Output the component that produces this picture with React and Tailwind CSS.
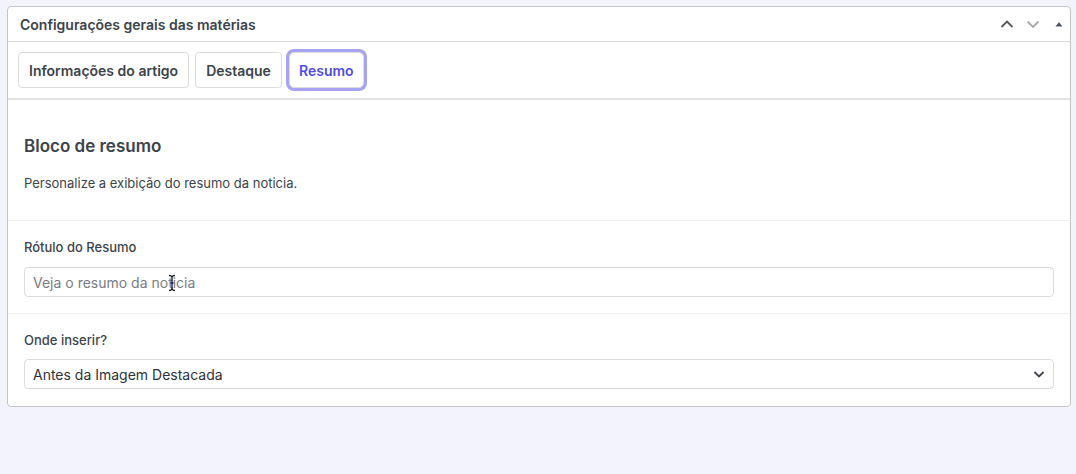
import React from "react";

const font = { fontFamily: "Inter, 'Noto Sans', 'Liberation Sans', sans-serif" };

function Chevron({ dir = "up", color = "#50575e" }) {
  return (
    <svg width="16" height="16" viewBox="0 0 16 16" fill="none">
      {dir === "up" ? (
        <path d="M2.5 11 L8 5.5 L13.5 11" stroke={color} strokeWidth="1.8" />
      ) : (
        <path d="M2.5 5.5 L8 11 L13.5 5.5" stroke={color} strokeWidth="1.8" />
      )}
    </svg>
  );
}

export default function App() {
  return (
    <div className="w-[1076px] h-[474px] bg-[#f3f3fc] pt-[6px] pl-[7px] pr-[5px]" style={font}>
      <div className="bg-white border border-[#c3c4c7] rounded-[4px] w-[1064px]">
        <div className="h-[35px] flex items-center justify-between pl-[12px] pr-[3px] border-b border-[#dcdcde]">
          <span className="text-[14px] font-semibold text-[#3c434a]">Configurações gerais das matérias</span>
          <div className="flex items-center gap-[10px]">
            <Chevron dir="up" color="#50575e" />
            <Chevron dir="down" color="#a7aaad" />
            <svg width="16" height="16" viewBox="0 0 16 16">
              <path d="M4.5 10.5 L8 6 L11.5 10.5 Z" fill="#50575e" />
            </svg>
          </div>
        </div>
        <div className="h-[58px] flex items-center gap-[6px] pl-[10px] border-b-2 border-[#e2e2e4]">
          <button className="h-[36px] px-[10px] border border-[#dcdcde] rounded-[4px] bg-white text-[14px] font-semibold text-[#3c434a]">
            Informações do artigo
          </button>
          <button className="h-[36px] px-[10px] border border-[#dcdcde] rounded-[4px] bg-white text-[14px] font-semibold text-[#3c434a]">
            Destaque
          </button>
          <button className="h-[36px] w-[75px] ml-[1px] rounded-[5px] bg-white text-[14px] font-semibold text-[#4f4ce8] border border-[#dcdcde] ring-[3px] ring-[#a5a3f2]">
            Resumo
          </button>
        </div>
        <div className="px-[16px] pt-[36px] pb-[28px] border-b border-[#f0f0f1]">
          <h2 className="text-[17px] font-semibold text-[#3c434a] leading-[20px]">Bloco de resumo</h2>
          <p className="mt-[18px] text-[13px] text-[#3c434a] leading-[18px]">Personalize a exibição do resumo da noticia.</p>
        </div>
        <div className="px-[16px] pt-[17px] pb-[16px] border-b border-[#f0f0f1]">
          <label className="block text-[13px] font-medium text-[#3c434a] leading-[18px]">Rótulo do Resumo</label>
          <div className="relative mt-[11px]">
            <input
              readOnly
              placeholder="Veja o resumo da noticia"
              className="w-full h-[30px] px-[8px] border border-[#dcdcde] rounded-[4px] text-[14px] text-[#3c434a] placeholder:text-[#787c82] outline-none"
              style={font}
            />
            <svg width="10" height="18" viewBox="0 0 10 18" className="absolute left-[143px] top-[7px]">
              <path d="M2 1.5 Q5 1.5 5 4 L5 14 Q5 16.5 2 16.5 M8 1.5 Q5 1.5 5 4 M5 14 Q5 16.5 8 16.5 M3.5 9 L6.5 9" stroke="#1d2327" strokeWidth="1.3" fill="none" />
            </svg>
          </div>
        </div>
        <div className="px-[16px] pt-[17px] pb-[17px]">
          <label className="block text-[13px] font-medium text-[#3c434a] leading-[18px]">Onde inserir?</label>
          <div className="relative mt-[10px]">
            <div className="w-full h-[30px] px-[8px] flex items-center border border-[#dcdcde] rounded-[4px] text-[14px] text-[#2c3338]">
              Antes da Imagem Destacada
            </div>
            <svg width="14" height="14" viewBox="0 0 14 14" className="absolute right-[8px] top-[8px]">
              <path d="M2.5 5 L7 9.5 L11.5 5" stroke="#3c434a" strokeWidth="1.8" fill="none" />
            </svg>
          </div>
        </div>
      </div>
    </div>
  );
}
